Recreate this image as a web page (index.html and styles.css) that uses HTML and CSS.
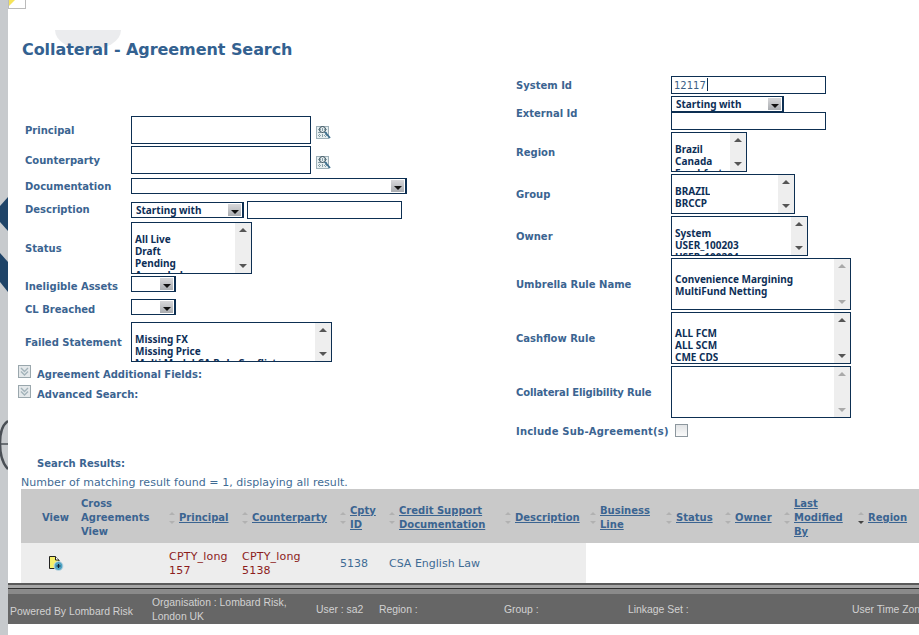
FILE: index.html
```html
<!DOCTYPE html>
<html lang="en">
<head>
  <meta charset="UTF-8">
  <title>Collateral - Agreement Search</title>
  <link rel="stylesheet" href="styles.css">
</head>
<body>
  <svg class="defs" width="0" height="0">
    <symbol id="finder" viewBox="0 0 15 14">
      <rect x="0.5" y="1.5" width="12" height="12" fill="#e6eef0" stroke="#9db0b8"/>
      <path d="M2 4.5h9M2 7.5h9M2 10.5h9M3.5 3v9M6.5 3v9M9.5 3v9" stroke="#6f8a96" stroke-width="0.8" stroke-dasharray="1 1"/>
      <circle cx="6.5" cy="4.5" r="3" fill="none" stroke="#39505c"/>
      <path d="M9 7L14 13" stroke="#3d6f8f" stroke-width="1.8"/>
    </symbol>
    <symbol id="toggle" viewBox="0 0 13 13">
      <rect x="0.5" y="0.5" width="12" height="12" fill="#e4e8ea" stroke="#9aa7ad"/>
      <path d="M3 3l3.5 3.5L10 3M3 6.5L6.5 10 10 6.5" fill="none" stroke="#a3b3ba" stroke-width="1.4"/>
    </symbol>
  </svg>

  <div class="page">
    <div class="rail">
      <svg width="8" height="635" viewBox="0 0 8 635">
        <path d="M8 197L0 206V222L8 231Z" fill="#1f4468"/>
        <path d="M0 253L8 262V292L0 282Z" fill="#1f4468"/>
        <path d="M8 421C2 425 0 433 0 443C0 455 3 464 8 469" fill="none" stroke="#4a4f55" stroke-width="2.5"/>
        <path d="M0 444H8" stroke="#4a4f55" stroke-width="1.5"/>
      </svg>
    </div>

    <main class="content">
      <svg class="note" width="18" height="9" viewBox="0 0 18 9">
        <rect x="0.5" y="-2" width="17" height="10.5" fill="#fff" stroke="#bbb"/>
        <path d="M1 0H7L1 6Z" fill="#f6e45a"/>
      </svg>
      <div class="watermark"></div>

      <h1 class="title">Collateral - Agreement Search</h1>

      <form class="search">
        <div class="col col-left">
          <div class="row">
            <label class="lbl">Principal</label>
            <div class="input input-tall input-party"></div>
            <svg class="finder" width="15" height="14"><use href="#finder"/></svg>
          </div>
          <div class="row gap-2">
            <label class="lbl">Counterparty</label>
            <div class="input input-tall input-party"></div>
            <svg class="finder" width="15" height="14"><use href="#finder"/></svg>
          </div>
          <div class="row gap-4">
            <label class="lbl">Documentation</label>
            <div class="combo combo-doc"><span class="combo-btn"></span></div>
          </div>
          <div class="row gap-7">
            <label class="lbl lbl-high">Description</label>
            <div class="combo combo-match"><span>Starting with</span><span class="combo-btn"></span></div>
            <div class="input input-desc"></div>
          </div>
          <div class="row gap-3">
            <label class="lbl">Status</label>
            <div class="list list-status">
              <div class="list-items"><div>All Live</div><div>Draft</div><div>Pending</div><div>Amended</div></div>
              <div class="scroll"></div>
            </div>
          </div>
          <div class="row gap-2">
            <label class="lbl lbl-low">Ineligible Assets</label>
            <div class="combo combo-flag"><span class="combo-btn"></span></div>
          </div>
          <div class="row gap-7">
            <label class="lbl lbl-low">CL Breached</label>
            <div class="combo combo-flag"><span class="combo-btn"></span></div>
          </div>
          <div class="row gap-7">
            <label class="lbl">Failed Statement</label>
            <div class="list list-failed">
              <div class="list-items"><div>Missing FX</div><div>Missing Price</div><div>Multi Model CA Rule Conflict</div></div>
              <div class="scroll"></div>
            </div>
          </div>
          <div class="toggle toggle-first">
            <svg width="13" height="13"><use href="#toggle"/></svg>
            <span>Agreement Additional Fields:</span>
          </div>
          <div class="toggle">
            <svg width="13" height="13"><use href="#toggle"/></svg>
            <span>Advanced Search:</span>
          </div>
        </div>

        <div class="col col-right">
          <div class="row">
            <label class="lbl">System Id</label>
            <div class="input input-id">12117<i class="caret"></i></div>
          </div>
          <div class="row gap-2">
            <label class="lbl">External Id</label>
            <div class="stack">
              <div class="combo combo-match"><span>Starting with</span><span class="combo-btn"></span></div>
              <div class="input input-id"></div>
            </div>
          </div>
          <div class="row gap-2">
            <label class="lbl">Region</label>
            <div class="list list-region">
              <div class="list-items"><div>Brazil</div><div>Canada</div><div>Frankfurt</div></div>
              <div class="scroll"></div>
            </div>
          </div>
          <div class="row gap-2">
            <label class="lbl">Group</label>
            <div class="list list-group">
              <div class="list-items"><div>BRAZIL</div><div>BRCCP</div></div>
              <div class="scroll"></div>
            </div>
          </div>
          <div class="row gap-2">
            <label class="lbl">Owner</label>
            <div class="list list-owner">
              <div class="list-items"><div>System</div><div>USER_100203</div><div>USER_100204</div></div>
              <div class="scroll"></div>
            </div>
          </div>
          <div class="row gap-2">
            <label class="lbl">Umbrella Rule Name</label>
            <div class="list list-rule">
              <div class="list-items"><div>Convenience Margining</div><div>MultiFund Netting</div></div>
              <div class="scroll scroll-faded"></div>
            </div>
          </div>
          <div class="row gap-2">
            <label class="lbl">Cashflow Rule</label>
            <div class="list list-rule">
              <div class="list-items"><div>ALL FCM</div><div>ALL SCM</div><div>CME CDS</div></div>
              <div class="scroll"></div>
            </div>
          </div>
          <div class="row gap-2">
            <label class="lbl lbl-tight">Collateral Eligibility Rule</label>
            <div class="list list-rule">
              <div class="list-items"></div>
              <div class="scroll scroll-faded"></div>
            </div>
          </div>
          <div class="check-row">
            <label class="lbl lbl-auto">Include Sub-Agreement(s)</label>
            <span class="checkbox"></span>
          </div>
        </div>
      </form>

      <h2 class="results-title">Search Results:</h2>
      <p class="results-count">Number of matching result found = 1, displaying all result.</p>

      <table class="results">
        <colgroup>
          <col class="c-view"><col class="c-cross"><col class="c-principal"><col class="c-cpty"><col class="c-id">
          <col class="c-credit"><col class="c-desc"><col class="c-line"><col class="c-status"><col class="c-owner">
          <col class="c-last"><col class="c-region">
        </colgroup>
        <thead>
          <tr>
            <th class="th-view">View</th>
            <th class="th-cross">Cross Agreements View</th>
            <th><div class="sortable"><i class="sort"></i><a href="#">Principal</a></div></th>
            <th><div class="sortable"><i class="sort"></i><a href="#">Counterparty</a></div></th>
            <th><div class="sortable"><i class="sort"></i><a href="#">Cpty ID</a></div></th>
            <th><div class="sortable"><i class="sort"></i><a href="#">Credit Support Documentation</a></div></th>
            <th><div class="sortable"><i class="sort"></i><a href="#">Description</a></div></th>
            <th><div class="sortable"><i class="sort"></i><a href="#">Business Line</a></div></th>
            <th><div class="sortable"><i class="sort"></i><a href="#">Status</a></div></th>
            <th><div class="sortable"><i class="sort"></i><a href="#">Owner</a></div></th>
            <th><div class="sortable"><i class="sort"></i><a href="#">Last Modified By</a></div></th>
            <th><div class="sortable"><i class="sort sort-active"></i><a href="#">Region</a></div></th>
          </tr>
        </thead>
        <tbody>
          <tr>
            <td class="cell td-view">
              <svg width="15" height="15" viewBox="0 0 15 15">
                <path d="M0.5 0.5H6.5L10 4V12.5H0.5Z" fill="#f7f06a" stroke="#222"/>
                <path d="M6.5 0.5V4H10" fill="#fff" stroke="#222"/>
                <circle cx="9.5" cy="10" r="4.5" fill="#4ea3c4" stroke="#c9dbe3"/>
                <path d="M7.5 10H11.5M9.5 8V12" stroke="#123" stroke-width="1.2"/>
              </svg>
            </td>
            <td class="cell"></td>
            <td class="cell td-red">CPTY_long 157</td>
            <td class="cell td-red">CPTY_long 5138</td>
            <td class="cell">5138</td>
            <td class="cell">CSA English Law</td>
            <td class="cell"></td>
            <td></td><td></td><td></td><td></td><td></td>
          </tr>
        </tbody>
      </table>

      <footer class="footer">
        <div class="foot-lines"></div>
        <div class="foot-bar">
          <span class="foot-powered">Powered By Lombard Risk</span>
          <span>Organisation : Lombard Risk,<br>London UK</span>
          <span>User : sa2</span>
          <span>Region :</span>
          <span>Group :</span>
          <span>Linkage Set :</span>
          <span>User Time Zone :</span>
        </div>
      </footer>
    </main>
  </div>
</body>
</html>
```

FILE: styles.css
```css
html, body {
  margin: 0;
  padding: 0;
  background: #fff;
}
body {
  font-family: "DejaVu Sans", Verdana, sans-serif;
  font-size: 10px;
  color: #3b6491;
  overflow: hidden;
}
.defs {
  position: absolute;
}
.page {
  display: flex;
  width: 919px;
  height: 635px;
  overflow: hidden;
}
.rail {
  flex: none;
  width: 8px;
  height: 635px;
  background: #c7cacd;
}
.rail svg {
  display: block;
}
.content {
  position: relative;
  flex: none;
  width: 911px;
  height: 635px;
  overflow: hidden;
}
.note {
  position: absolute;
  left: 0;
  top: 0;
}
.watermark {
  position: absolute;
  left: 47px;
  top: 30px;
  width: 66px;
  height: 20px;
  background: #ebecee;
  border-radius: 0 0 50% 50% / 0 0 100% 100%;
}
.title {
  position: relative;
  margin: 0;
  padding: 40px 0 0 14px;
  height: 36px;
  font-size: 16px;
  line-height: 19px;
  font-weight: bold;
  letter-spacing: -0.07px;
  color: #336190;
}

/* search form */
.search {
  display: flex;
  align-items: flex-start;
  height: 381px;
}
.col-left {
  flex: none;
  width: 508px;
  padding-top: 40px;
  box-sizing: border-box;
}
.col-left .row {
  padding-left: 17px;
}
.col-left .lbl {
  width: 106px;
}
.col-right .lbl {
  width: 155px;
}
.row {
  display: flex;
  align-items: center;
}
.gap-2 { margin-top: 2px; }
.gap-3 { margin-top: 3px; }
.gap-4 { margin-top: 4px; }
.gap-7 { margin-top: 7px; }
.lbl {
  position: relative;
  top: 1px;
  flex: none;
  font-weight: bold;
  font-size: 10px;
  line-height: 14px;
  color: #3b6491;
}
.lbl-low {
  top: 3px;
}
.lbl-high {
  top: 0;
}
.lbl-tight {
  letter-spacing: -0.15px;
}
.col-right .lbl-auto {
  width: auto;
  letter-spacing: 0.2px;
}
.input {
  box-sizing: border-box;
  height: 18px;
  border: 1px solid #0d2f52;
  background: #fff;
  font-size: 10px;
  line-height: 17px;
  padding-left: 2px;
  color: #3b5f85;
}
.input-tall {
  height: 28px;
}
.input-party {
  width: 180px;
}
.input-desc {
  width: 155px;
  margin-left: 3px;
}
.input-id {
  width: 155px;
}
.caret {
  display: inline-block;
  width: 1px;
  height: 13px;
  margin-left: 1px;
  vertical-align: -2px;
  background: #0d2f52;
}
.finder {
  margin: 4px 0 0 5px;
}
.stack {
  display: flex;
  flex-direction: column;
}
.combo {
  box-sizing: border-box;
  display: flex;
  align-items: center;
  height: 16px;
  border: 1px solid #0d2f52;
  border-right-width: 2px;
  background: #fff;
  padding-left: 4px;
  font-family: "Noto Sans", Tahoma, sans-serif;
  font-size: 10px;
  font-weight: bold;
  color: #0d2f57;
}
.combo-doc { width: 276px; }
.combo-match { width: 113px; }
.combo-flag { width: 45px; }
.combo-btn {
  position: relative;
  flex: none;
  width: 15px;
  height: 14px;
  margin-left: auto;
  box-sizing: border-box;
  border: 1px solid #fff;
  background: linear-gradient(#d8d8da, #a9acb0);
}
.combo-btn::after {
  content: "";
  position: absolute;
  left: 3px;
  top: 6px;
  border: 4px solid transparent;
  border-top-color: #111;
  border-bottom-width: 0;
}
.list {
  box-sizing: border-box;
  display: flex;
  justify-content: space-between;
  height: 40px;
  border: 1px solid #0d2f52;
  background: #fff;
  overflow: hidden;
}
.list-status { width: 121px; height: 52px; }
.list-failed { width: 201px; }
.list-region { width: 76px; }
.list-group { width: 124px; }
.list-owner { width: 137px; }
.list-rule { width: 180px; height: 52px; }
.list-items {
  padding: 10px 0 0 3px;
  font-family: "Noto Sans", Tahoma, sans-serif;
  font-size: 10px;
  font-weight: bold;
  line-height: 12px;
  color: #0d2f57;
  white-space: nowrap;
  overflow: hidden;
}
.list-rule .list-items {
  padding-top: 14px;
}
.scroll {
  position: relative;
  flex: none;
  width: 16px;
  background: #eeeeee;
}
.scroll::before,
.scroll::after {
  content: "";
  position: absolute;
  left: 4px;
  border: 4px solid transparent;
}
.scroll::before {
  top: 5px;
  border-top-width: 0;
  border-bottom-color: #555;
}
.scroll::after {
  bottom: 5px;
  border-bottom-width: 0;
  border-top-color: #555;
}
.scroll-faded::before { border-bottom-color: #aaa; }
.scroll-faded::after { border-top-color: #aaa; }
.toggle {
  display: flex;
  align-items: flex-start;
  height: 20px;
  margin-left: 10px;
  font-weight: bold;
  line-height: 14px;
}
.toggle span {
  margin: 3px 0 0 6px;
}
.toggle-first {
  margin-top: 3px;
}
.check-row {
  display: flex;
  align-items: center;
  margin-top: 6px;
  height: 14px;
}
.checkbox {
  box-sizing: border-box;
  width: 13px;
  height: 13px;
  margin: -2px 0 0 6px;
  border: 1px solid #8d979e;
  background: linear-gradient(#e2e4e6, #fafafa);
}

/* results */
.results-title {
  margin: 0;
  padding-left: 29px;
  font-size: 10px;
  line-height: 14px;
  font-weight: bold;
  color: #3b6491;
}
.results-count {
  margin: 5px 0 0 13px;
  font-size: 11px;
  line-height: 13px;
  letter-spacing: 0.05px;
  white-space: nowrap;
  color: #3f6b94;
}
.results {
  table-layout: fixed;
  width: 898px;
  margin-left: 13px;
  border-collapse: collapse;
  border-spacing: 0;
}
.c-view { width: 54px; }
.c-cross { width: 90px; }
.c-principal { width: 73px; }
.c-cpty { width: 98px; }
.c-id { width: 49px; }
.c-credit { width: 116px; }
.c-desc { width: 85px; }
.c-line { width: 76px; }
.c-status { width: 59px; }
.c-owner { width: 59px; }
.c-last { width: 74px; }
.c-region { width: 65px; }
.results th {
  box-sizing: border-box;
  height: 54px;
  padding: 3px 0 0;
  background: #c9c9c9;
  font-size: 10px;
  line-height: 14px;
  font-weight: bold;
  text-align: left;
  color: #3b6491;
}
.results td {
  box-sizing: border-box;
  height: 40px;
  padding: 2px 0 0 4px;
  font-size: 11px;
  line-height: 14px;
  color: #3f6b94;
}
.results .cell {
  background: #ededed;
}
.results .td-red {
  padding-right: 10px;
  letter-spacing: 0.2px;
  color: #8c1c1c;
}
.results .td-view {
  padding: 0 0 0 28px;
}
.td-view svg {
  display: block;
}
.results .th-view {
  text-align: right;
  padding-right: 6px;
}
.results .th-cross {
  padding-left: 6px;
}
.sortable {
  display: flex;
  align-items: center;
  padding-left: 4px;
}
.sortable a {
  color: #3b6491;
  text-decoration: underline;
}
.sort {
  flex: none;
  position: relative;
  width: 10px;
  height: 12px;
}
.sort::before,
.sort::after {
  content: "";
  position: absolute;
  left: 0;
  border: 3.5px solid transparent;
}
.sort::before {
  top: 0;
  border-top-width: 0;
  border-bottom-color: #b1b1b1;
}
.sort::after {
  bottom: 0;
  border-bottom-width: 0;
  border-top-color: #b1b1b1;
}
.sort-active::after {
  border-top-color: #444;
}

/* footer */
.foot-lines {
  height: 11px;
  box-sizing: border-box;
  background: linear-gradient(#5a5a5a 0 2px, #a5a5a5 2px 5px, #2f2f2f 5px 6px, #8a8a8a 6px);
}
.foot-bar {
  display: grid;
  grid-template-columns: 142px 164px 63px 125px 124px 224px 200px;
  align-items: center;
  box-sizing: border-box;
  height: 30px;
  padding: 2px 0 0 2px;
  overflow: hidden;
  background: #666;
  font-family: "Liberation Sans", Arial, sans-serif;
  font-size: 10.4px;
  line-height: 14px;
  color: #d2d2d2;
  white-space: nowrap;
}
.foot-powered {
  position: relative;
  top: 2px;
}
```
